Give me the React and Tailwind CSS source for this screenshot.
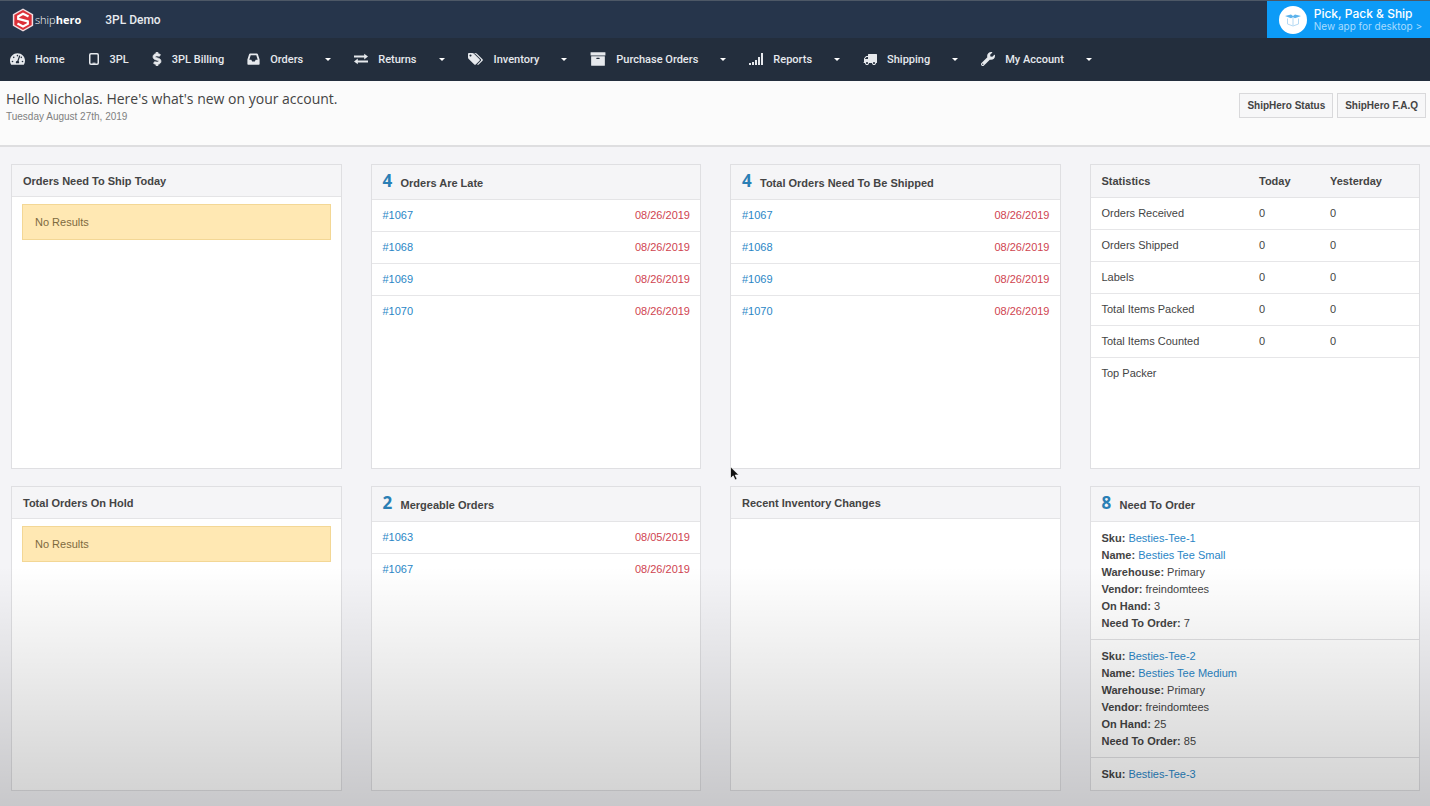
import { FaTachometerAlt, FaDollarSign, FaWrench } from 'react-icons/fa'

const TabletIcon = () => (
  <svg viewBox="0 0 12 14" className="w-3 h-3.5" fill="none" stroke="currentColor" strokeWidth="1.5">
    <rect x="1.75" y="1.75" width="8.5" height="10.5" rx="1.2" />
    <path d="M4.5 11.2h3" strokeWidth="1" />
  </svg>
)

const InboxIcon = () => (
  <svg viewBox="0 0 13 14" className="w-[13px] h-3.5" fill="currentColor" fillRule="evenodd">
    <path d="M3.200 1.500h6.600c.6 0 .9.3 1.100.8L12.600 7.500v4.600c0 .4-.3.700-.7.700H1.100c-.4 0-.7-.3-.7-.7V7.500L2.100 2.300c.2-.5.5-.8 1.100-.8zM3.700 3.200L2.300 7.700h2l.9 1.700h2.600l.9-1.700h2L9.300 3.200z" />
  </svg>
)

const ExchangeIcon = () => (
  <svg viewBox="0 0 14 14" className="w-3.5 h-3.5" fill="currentColor">
    <path d="M0 3.600h10.200V1.800L14 4.600l-3.800 2.800V5.600H0zM14 10.400H3.800v1.800L0 9.400l3.800-2.800v1.800H14z" />
  </svg>
)

const TagsIcon = () => (
  <svg viewBox="0 0 2048 1792" className="w-4 h-3.5" fill="currentColor">
    <path d="M448 448q0-53-37.500-90.500t-90.500-37.500-90.500 37.500-37.500 90.500 37.500 90.500 90.500 37.500 90.500-37.500 37.500-90.500zm1067 576q0 53-37 90l-491 492q-39 37-91 37-53 0-90-37l-715-716q-38-37-64.500-101t-26.500-117v-416q0-52 38-90t90-38h416q53 0 117 26.500t102 64.500l715 714q37 39 37 91zm384 0q0 53-37 90l-491 492q-39 37-91 37-36 0-59-14t-53-45l470-470q37-37 37-90 0-52-37-91l-715-714q-38-38-102-64.500t-117-26.500h224q53 0 117 26.500t102 64.500l715 714q37 39 37 91z" />
  </svg>
)

const ArchiveIcon = () => (
  <svg viewBox="0 0 1792 1792" className="w-4 h-4" fill="currentColor">
    <path d="M1088 832q0-26-19-45t-45-19h-256q-26 0-45 19t-19 45 19 45 45 19h256q26 0 45-19t19-45zm576-192v960q0 26-19 45t-45 19h-1408q-26 0-45-19t-19-45v-960q0-26 19-45t45-19h1408q26 0 45 19t19 45zm64-448v256q0 26-19 45t-45 19h-1536q-26 0-45-19t-19-45v-256q0-26 19-45t45-19h1536q26 0 45 19t19 45z" />
  </svg>
)

const SignalIcon = () => (
  <svg viewBox="0 0 14 14" className="w-3.5 h-3.5" fill="currentColor">
    <path d="M0 11h2v2H0zM3 10h2v3H3zM6 8h2v5H6zM9 5h2v8H9zM12 1h2v12h-2z" />
  </svg>
)

const TruckIcon = () => (
  <svg viewBox="0 0 1792 1792" className="w-3.5 h-3.5" fill="currentColor">
    <path d="M640 1408q0-52-38-90t-90-38-90 38-38 90 38 90 90 38 90-38 38-90zm-384-512h384v-256h-158q-13 0-22 9l-195 195q-9 9-9 22v30zm1280 512q0-52-38-90t-90-38-90 38-38 90 38 90 90 38 90-38 38-90zm256-1088v1024q0 15-4 26.500t-13.500 18.500-16.500 11.500-23.500 6-22.500 2-25.500 0-22.500-.5q0 106-75 181t-181 75-181-75-75-181h-384q0 106-75 181t-181 75-181-75-75-181h-64q-3 0-22.500.5t-25.500 0-22.500-2-23.500-6-16.500-11.500-13.500-18.500-4-26.500q0-26 19-45t45-19v-320q0-8-.5-35t0-38 2.500-34.500 6.500-37 14-30.500 22.500-30l198-198q19-19 50.500-32t58.500-13h160v-192q0-26 19-45t45-19h1024q26 0 45 19t19 45z" />
  </svg>
)

const navItems = [
  { label: 'Home', icon: <FaTachometerAlt className="w-[15px] h-3.5" /> },
  { label: '3PL', icon: <TabletIcon /> },
  { label: '3PL Billing', icon: <FaDollarSign className="w-2.5 h-3.5 stroke-current stroke-[30]" /> },
  { label: 'Orders', icon: <InboxIcon />, menu: true },
  { label: 'Returns', icon: <ExchangeIcon />, menu: true },
  { label: 'Inventory', icon: <TagsIcon />, menu: true },
  { label: 'Purchase Orders', icon: <ArchiveIcon />, menu: true },
  { label: 'Reports', icon: <SignalIcon />, menu: true },
  { label: 'Shipping', icon: <TruckIcon />, menu: true },
  { label: 'My Account', icon: <FaWrench className="w-3.5 h-3.5" />, menu: true },
]

const lateOrders = [
  { id: '#1067', date: '08/26/2019' },
  { id: '#1068', date: '08/26/2019' },
  { id: '#1069', date: '08/26/2019' },
  { id: '#1070', date: '08/26/2019' },
]

const mergeableOrders = [
  { id: '#1063', date: '08/05/2019' },
  { id: '#1067', date: '08/26/2019' },
]

const stats = ['Orders Received', 'Orders Shipped', 'Labels', 'Total Items Packed', 'Total Items Counted']

const needToOrder = [
  { sku: 'Besties-Tee-1', name: 'Besties Tee Small', warehouse: 'Primary', vendor: 'freindomtees', onHand: 3, need: 7 },
  { sku: 'Besties-Tee-2', name: 'Besties Tee Medium', warehouse: 'Primary', vendor: 'freindomtees', onHand: 25, need: 85 },
  { sku: 'Besties-Tee-3' },
]

const Logo = () => (
  <a href="#" className="flex items-center text-white">
    <svg viewBox="0 0 24 26" className="w-6 h-6">
      <path d="M12 .5l11 6.200v12.600L12 25.500 1 19.300V6.700z" fill="#f3dfe2" />
      <path d="M12 2.300l9.400 5.300v10.800L12 23.700l-9.400-5.300V7.600z" fill="#dc3038" />
      <path d="M18 9.300L12 6.200 6.800 9.200v2.600l10.400 2.700v2.700L12 20l-6-3.200" fill="none" stroke="#fff" strokeWidth="2.400" />
    </svg>
    <span className="font-['Open_Sans'] text-[11px] leading-4 font-light">ship<b className="font-bold">hero</b></span>
  </a>
)

const Card = ({ title, count, children }) => (
  <section className="h-[305px] overflow-hidden bg-white border border-[#dfdfe2]">
    <header className={`flex items-center gap-2 pl-[11px] pr-2.5 bg-[#f5f5f7] border-b border-[#e4e4e6] ${count ? 'h-[35px]' : 'h-8'}`}>
      {count && <span className="w-2.5 pb-0.5 text-[#2a7fb5] font-['Open_Sans'] text-[17px] leading-5 font-bold">{count}</span>}
      <h2 className={`text-[11px] leading-4 font-bold ${count ? 'pt-0.5' : ''}`}>{title}</h2>
    </header>
    {children}
  </section>
)

const NoResults = () => (
  <div className="mx-2.5 mt-[7px] px-3 py-[9px] bg-[#ffe8b3] border border-[#f3d795] text-[#7d6a3f] text-[11px] leading-4">
    No Results
  </div>
)

const OrderList = ({ orders }) => (
  <ul>
    {orders.map((order, i) => (
      <li key={order.id} className={`flex justify-between h-8 pl-[11px] pr-2.5 py-[7px] leading-4 ${i < orders.length - 1 ? 'border-b border-[#e6e6e8]' : ''}`}>
        <a href="#" className="text-[#2a86c6]">{order.id}</a>
        <span className="text-[#cf4450]">{order.date}</span>
      </li>
    ))}
  </ul>
)

const Statistics = () => (
  <section className="h-[305px] overflow-hidden bg-white border border-[#dfdfe2]">
    <table className="w-full text-left leading-4">
      <thead>
        <tr className="h-8 bg-[#f5f5f7] border-b border-[#e4e4e6]">
          <th className="pl-[11px]">Statistics</th>
          <th className="w-[71px]">Today</th>
          <th className="w-[89px]">Yesterday</th>
        </tr>
      </thead>
      <tbody>
        {stats.map((label) => (
          <tr key={label} className="h-8 border-b border-[#e6e6e8]">
            <td className="pl-[11px]">{label}</td>
            <td>0</td>
            <td>0</td>
          </tr>
        ))}
        <tr className="h-8">
          <td className="pl-[11px]" colSpan={3}>Top Packer</td>
        </tr>
      </tbody>
    </table>
  </section>
)

const StockItem = ({ item }) => (
  <li className="pl-[11px] pr-2.5 pt-2 pb-[7px] border-b border-[#e0e0e2] leading-[17px]">
    <p><b>Sku:</b> <a href="#" className="text-[#2a86c6]">{item.sku}</a></p>
    {item.name && (
      <>
        <p><b>Name:</b> <a href="#" className="text-[#2a86c6]">{item.name}</a></p>
        <p><b>Warehouse:</b> {item.warehouse}</p>
        <p><b>Vendor:</b> {item.vendor}</p>
        <p><b>On Hand:</b> {item.onHand}</p>
        <p><b>Need To Order:</b> {item.need}</p>
      </>
    )}
  </li>
)

const Header = () => (
  <header className="font-[Roboto,sans-serif] border-t border-[#4d5866]">
    <div className="flex justify-between items-stretch h-[37px] bg-[#26354b]">
      <div className="flex items-center gap-6 pl-[11px]">
        <Logo />
        <span className="text-[#e8ebef] text-xs leading-4 font-medium">3PL Demo</span>
      </div>
      <a href="#" className="flex items-center gap-[7px] pl-3 pr-2 bg-[#0c9bf7] text-white">
        <svg viewBox="0 0 28 28" className="w-7 h-7">
          <circle cx="14" cy="14" r="14" fill="#fff" />
          <path d="M6 10l6-1.500L14 10l2-1.500 6 1.500-6 2.200-2-1-2 1z" fill="#5db3ec" />
          <path d="M8.500 12.500v5.500l5.500 2 5.500-2v-5.500M14 12v7.500" fill="none" stroke="#b4d9f3" />
        </svg>
        <span className="font-['Inter']">
          <strong className="block text-xs leading-[13px] font-medium">Pick, Pack &amp; Ship</strong>
          <span className="block text-[10px] leading-3 text-[#a8dcff]">New app for desktop &gt;</span>
        </span>
      </a>
    </div>
    <nav className="flex items-center h-[43px] pl-2.5 bg-[#232e3d] text-[#e6e9ed] text-[11px] leading-4 font-medium">
      {navItems.map(({ label, icon, menu }) => (
        <a key={label} href="#" className="flex items-center shrink-0 mr-[23px]">
          <span className="pb-0.5">{icon}</span>
          <span className="ml-2.5">{label}</span>
          {menu && <span className="ml-[22px] border-x-[3px] border-t-[3px] border-x-transparent border-t-white" />}
        </a>
      ))}
    </nav>
  </header>
)

const App = () => (
  <div className="relative min-h-screen bg-[#f4f4f7] font-['Liberation_Sans',Arial,sans-serif] text-[11px] text-[#444]">
    <Header />
    <div className="flex justify-between items-start h-[66px] pl-1.5 pr-1 bg-[#fbfbfb] border-b-2 border-[#dedee0]">
      <div className="pt-2">
        <h1 className="font-['Open_Sans'] text-sm leading-5">Hello Nicholas. Here's what's new on your account.</h1>
        <p className="text-[10px] leading-4 text-[#808080]">Tuesday August 27th, 2019</p>
      </div>
      <div className="flex gap-1 pt-3">
        <button className="h-[25px] px-[7px] bg-[#f7f7f8] border border-[#d9d9db] text-[10px] font-bold">ShipHero Status</button>
        <button className="h-[25px] px-[7px] bg-[#f7f7f8] border border-[#d9d9db] text-[10px] font-bold">ShipHero F.A.Q</button>
      </div>
    </div>

    <main className="grid grid-cols-4 gap-x-[29px] gap-y-[17px] pt-[17px] pr-2.5 pb-3.5 pl-[11px]">
      <Card title="Orders Need To Ship Today"><NoResults /></Card>
      <Card title="Orders Are Late" count="4"><OrderList orders={lateOrders} /></Card>
      <Card title="Total Orders Need To Be Shipped" count="4"><OrderList orders={lateOrders} /></Card>
      <Statistics />
      <Card title="Total Orders On Hold"><NoResults /></Card>
      <Card title="Mergeable Orders" count="2"><OrderList orders={mergeableOrders} /></Card>
      <Card title="Recent Inventory Changes" />
      <Card title="Need To Order" count="8">
        <ul>
          {needToOrder.map((item) => <StockItem key={item.sku} item={item} />)}
        </ul>
      </Card>
    </main>

    {/* Shade along the bottom edge */}
    <div className="absolute inset-x-0 bottom-0 h-60 bg-linear-to-b from-black/0 to-black/18 pointer-events-none" />

    {/* Mouse pointer */}
    <svg viewBox="0 0 10 15" className="absolute left-[730px] top-[466px] w-2.5 h-[15px]">
      <path d="M.5.8v11.500l2.700-2.500 1.900 4.200 2-.9-1.900-4.100h3.700z" fill="#111" stroke="#fff" strokeWidth=".7" />
    </svg>
  </div>
)

export default App
